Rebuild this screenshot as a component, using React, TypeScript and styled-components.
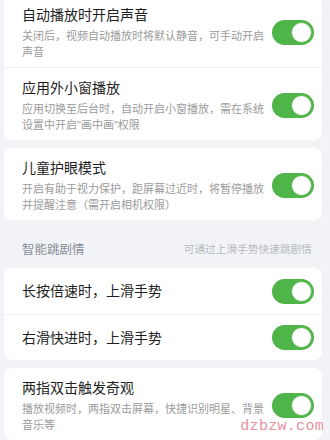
import { useState } from 'react'
import styled, { createGlobalStyle } from 'styled-components'

const GlobalStyle = createGlobalStyle`
  body {
    margin: 0;
    background-color: #f1f3f7;
    font-family: 'Liberation Sans', 'Noto Sans CJK SC', sans-serif;
    overflow: hidden;
  }
`

const Page = styled.div`
  position: relative;
  margin-top: -5px;
  padding: 0 8px 0 4px;
  display: flex;
  flex-direction: column;
  gap: 8px;
  height: 445px;
`

const Card = styled.div`
  background-color: #fff;
  border-radius: 8px;
  display: flex;
  flex-direction: column;
`

const Row = styled.div<{ divider?: boolean }>`
  display: flex;
  align-items: center;
  gap: 8px;
  min-height: 46px;
  box-sizing: border-box;
  padding: 10px 8px 7px 18px;
  border-top: ${props => (props.divider ? '1px solid #eef0f3' : 'none')};
`

const Single = styled(Row)`
  padding-top: 0;
  padding-bottom: 0;
`

const TextBox = styled.div`
  flex: 1;
  min-width: 0;
`

const Title = styled.div`
  font-size: 14px;
  line-height: 20px;
  color: #1e1e1e;
`

const Desc = styled.div`
  margin-top: 3px;
  font-size: 11px;
  line-height: 16px;
  color: #9b9b9b;
`

const Section = styled.div`
  display: flex;
  justify-content: space-between;
  align-items: center;
  padding: 8px 10px 0 18px;
  height: 26px;
`

const SectionTitle = styled.div`
  font-size: 12.5px;
  color: #8a8e96;
`

const SectionHint = styled.div`
  font-size: 10.7px;
  color: #b7bac1;
`

const Track = styled.button<{ on: boolean }>`
  flex: none;
  width: 42px;
  height: 25px;
  border-radius: 13px;
  border: none;
  padding: 2px;
  display: flex;
  justify-content: ${props => (props.on ? 'flex-end' : 'flex-start')};
  align-items: center;
  background-color: ${props => (props.on ? '#4fb548' : '#d5d8de')};
  cursor: pointer;
`

const Knob = styled.span`
  width: 21px;
  height: 21px;
  border-radius: 50%;
  background-color: #fff;
  box-sizing: border-box;
  border: 1px solid #5dbb55;
`

const Watermark = styled.div`
  position: absolute;
  right: 6px;
  bottom: 5px;
  font-family: 'Liberation Mono', monospace;
  font-size: 15px;
  color: #e7929e;
  letter-spacing: 0.3px;
`

function Toggle () {
  const [on, setOn] = useState(true)
  return (
    <Track on={on} onClick={() => setOn(v => !v)}>
      <Knob />
    </Track>
  )
}

function Item ({ title, desc, divider }: { title: string, desc?: string, divider?: boolean }) {
  const Wrap = desc ? Row : Single
  return (
    <Wrap divider={divider}>
      <TextBox>
        <Title>{title}</Title>
        {desc ? <Desc>{desc}</Desc> : null}
      </TextBox>
      <Toggle />
    </Wrap>
  )
}

export default function App () {
  return (
    <>
      <GlobalStyle />
      <Page>
        <Card>
          <Item
            title='自动播放时开启声音'
            desc='关闭后，视频自动播放时将默认静音，可手动开启声音'
          />
          <Item
            divider
            title='应用外小窗播放'
            desc='应用切换至后台时，自动开启小窗播放，需在系统设置中开启"画中画"权限'
          />
        </Card>
        <Card>
          <Item
            title='儿童护眼模式'
            desc='开启有助于视力保护，距屏幕过近时，将暂停播放并提醒注意（需开启相机权限）'
          />
        </Card>
        <Section>
          <SectionTitle>智能跳剧情</SectionTitle>
          <SectionHint>可通过上滑手势快速跳剧情</SectionHint>
        </Section>
        <Card>
          <Item title='长按倍速时，上滑手势' />
          <Item divider title='右滑快进时，上滑手势' />
        </Card>
        <Card>
          <Item
            title='两指双击触发奇观'
            desc='播放视频时，两指双击屏幕，快捷识别明星、背景音乐等'
          />
        </Card>
        <Watermark>dzbzw.com</Watermark>
      </Page>
    </>
  )
}
